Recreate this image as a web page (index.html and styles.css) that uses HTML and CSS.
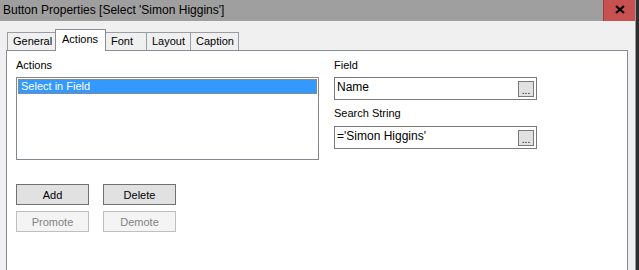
FILE: index.html
```html
<!DOCTYPE html>
<html lang="en">
<head>
  <meta charset="UTF-8">
  <title>Button Properties</title>
  <link rel="stylesheet" href="styles.css">
</head>
<body>
  <div class="window">
    <div class="titlebar">
      <span class="title">Button Properties [Select 'Simon Higgins']</span>
      <div class="close">
        <svg width="10" height="9" viewBox="0 0 10 9">
          <path d="M1 1 L9 8 M9 1 L1 8" stroke="#000" stroke-width="2.2" fill="none"/>
        </svg>
      </div>
    </div>

    <div class="dialog">
      <div class="tabs">
        <div class="tab tab-general">General</div>
        <div class="tab tab-actions active">Actions</div>
        <div class="tab tab-font">Font</div>
        <div class="tab tab-layout">Layout</div>
        <div class="tab tab-caption">Caption</div>
      </div>

      <div class="panel">
        <div class="col-left">
          <div class="label">Actions</div>
          <div class="listbox">
            <div class="list-item selected">Select in Field</div>
          </div>
          <div class="btn-grid">
            <button class="btn">Add</button>
            <button class="btn">Delete</button>
            <button class="btn disabled">Promote</button>
            <button class="btn disabled">Demote</button>
          </div>
        </div>

        <div class="col-right">
          <div class="label">Field</div>
          <div class="textbox">
            <span>Name</span>
            <span class="dots">...</span>
          </div>
          <div class="label second">Search String</div>
          <div class="textbox">
            <span>='Simon Higgins'</span>
            <span class="dots">...</span>
          </div>
        </div>
      </div>
    </div>
  </div>
</body>
</html>
```

FILE: styles.css
```css
html, body {
  margin: 0;
  padding: 0;
}
body {
  width: 639px;
  height: 270px;
  overflow: hidden;
  background-color: #2e2e2e;
  font-family: "Liberation Sans", Arial, sans-serif;
  font-size: 11px;
  color: #000;
}
.window {
  width: 635px;
  height: 270px;
  background-color: #f0f0f0;
  border-right: 1px solid #9a9a9a;
  display: flex;
  flex-direction: column;
}
.titlebar {
  height: 21px;
  background-color: #9f9f9f;
  display: flex;
  align-items: center;
  justify-content: space-between;
  flex-shrink: 0;
}
.title {
  font-size: 12px;
  padding-left: 3px;
  margin-top: -2px;
}
.close {
  width: 32px;
  height: 21px;
  background-color: #c75050;
  border-left: 1px solid #9a4040;
  display: flex;
  align-items: center;
  justify-content: center;
  box-sizing: border-box;
}
.close svg {
  margin-top: -3px;
}
.dialog {
  padding: 7px 6px 0 6px;
  flex: 1;
  display: flex;
  flex-direction: column;
}
.tabs {
  display: flex;
  align-items: flex-end;
  padding-left: 1px;
  height: 22px;
}
.tab {
  height: 18px;
  line-height: 17px;
  padding: 0 0 0 5px;
  border: 1px solid #999ca3;
  border-bottom: none;
  background-color: #f0f0f0;
  box-sizing: border-box;
  margin-left: -1px;
  white-space: nowrap;
  overflow: hidden;
}
.tab:first-child {
  margin-left: 0;
}
.tab-general { width: 49px; }
.tab-actions { width: 51px; }
.tab-font { width: 42px; }
.tab-layout { width: 45px; }
.tab-caption { width: 49px; }
.tab.active {
  height: 22px;
  line-height: 18px;
  padding-left: 6px;
  background-color: #fff;
  position: relative;
  top: 1px;
  z-index: 1;
  border-color: #898c95;
}
.panel {
  flex: 1;
  background-color: #fff;
  border: 1px solid #898c95;
  border-bottom: none;
  margin-right: 1px;
  padding: 8px 0 0 9px;
  display: flex;
  gap: 15px;
}
.label {
  height: 13px;
  line-height: 13px;
  margin-bottom: 5px;
}
.label.second {
  margin-top: 7px;
  margin-bottom: 6px;
}
.col-left {
  width: 303px;
}
.col-right {
  width: 203px;
}
.listbox {
  height: 83px;
  border: 1px solid #828790;
  box-sizing: border-box;
  padding: 1px;
}
.list-item {
  height: 15px;
  line-height: 13px;
  padding-left: 2px;
  box-sizing: border-box;
}
.list-item.selected {
  background-color: #3399ff;
  color: #fff;
  border: 1px dotted #d97c2a;
}
.btn-grid {
  margin-top: 24px;
  display: grid;
  grid-template-columns: 73px 73px;
  grid-auto-rows: 21px;
  column-gap: 14px;
  row-gap: 6px;
}
.btn {
  font-family: inherit;
  font-size: 11px;
  color: #000;
  background-color: #e1e1e1;
  border: 1px solid #707070;
  padding: 0;
  margin: 0;
}
.btn.disabled {
  color: #838383;
  background-color: #f4f4f4;
  border-color: #bfbfbf;
}
.textbox {
  height: 23px;
  border: 1px solid #7a7a7a;
  box-sizing: border-box;
  display: flex;
  align-items: center;
  justify-content: space-between;
  padding: 0 2px 0 2px;
  font-size: 12px;
}
.textbox span:first-child {
  margin-top: -3px;
}
.dots {
  width: 16px;
  height: 16px;
  box-sizing: border-box;
  border: 1px solid #7a7a7a;
  background-color: #e1e1e1;
  font-size: 10px;
  line-height: 17px;
  text-align: center;
  letter-spacing: 0;
}
```
